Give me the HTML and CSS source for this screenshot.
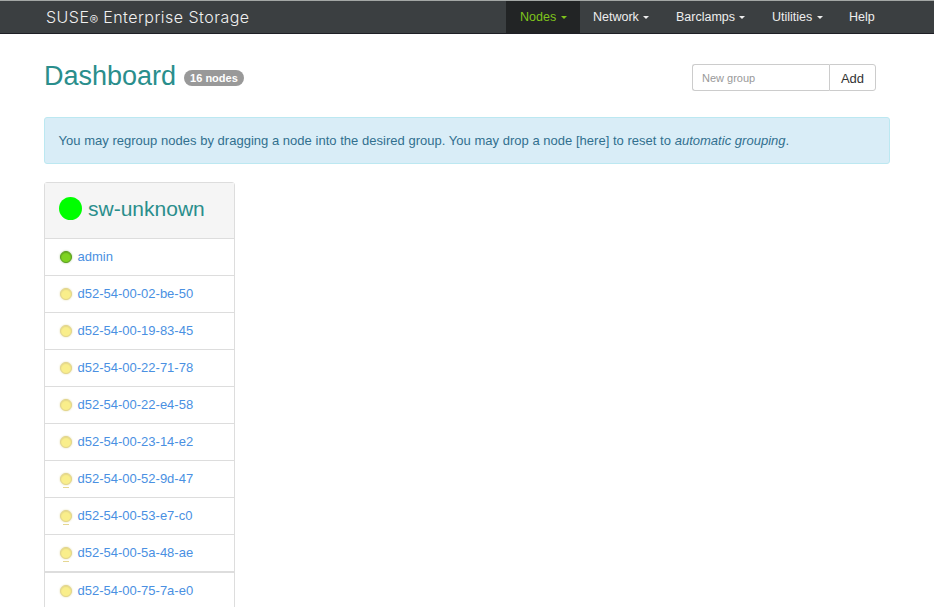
FILE: index.html
```html
<!DOCTYPE html>
<html lang="en">
<head>
<meta charset="utf-8">
<title>Dashboard</title>
<link rel="stylesheet" href="styles.css">
</head>
<body>
<nav class="navbar">
  <a class="brand">SUSE<span class="reg">®</span> Enterprise Storage</a>
  <div class="menu">
    <a class="item nodes active">Nodes<i class="caret"></i></a>
    <a class="item network">Network<i class="caret"></i></a>
    <a class="item barclamps">Barclamps<i class="caret"></i></a>
    <a class="item utilities">Utilities<i class="caret"></i></a>
    <a class="item">Help</a>
  </div>
</nav>
<main class="content">
  <header class="heading">
    <h1>Dashboard</h1>
    <span class="badge">16 nodes</span>
    <form class="group-form"><input type="text" placeholder="New group"><button type="button">Add</button></form>
  </header>
  <div class="alert">You may regroup nodes by dragging a node into the desired group. You may drop a node [here] to reset to <em>automatic grouping</em>.</div>
  <section class="panel">
    <h2><span class="pie"></span>sw-unknown</h2>
    <ul>
      <li><span class="led ready"></span><a>admin</a></li>
      <li><span class="led"></span><a>d52-54-00-02-be-50</a></li>
      <li><span class="led"></span><a>d52-54-00-19-83-45</a></li>
      <li><span class="led"></span><a>d52-54-00-22-71-78</a></li>
      <li><span class="led"></span><a>d52-54-00-22-e4-58</a></li>
      <li><span class="led"></span><a>d52-54-00-23-14-e2</a></li>
      <li><span class="led edge"></span><a>d52-54-00-52-9d-47</a></li>
      <li><span class="led edge"></span><a>d52-54-00-53-e7-c0</a></li>
      <li class="last-row"><span class="led edge"></span><a>d52-54-00-5a-48-ae</a></li>
      <li><span class="led"></span><a>d52-54-00-75-7a-e0</a></li>
    </ul>
  </section>
</main>
</body>
</html>
```
FILE: styles.css
```css
* { box-sizing: border-box; }
html, body { height: 100%; }
body {
  margin: 0;
  overflow: hidden;
  background: #fff;
  font: 13px/18px "Liberation Sans", Arial, sans-serif;
  color: #333;
}
.navbar {
  display: flex;
  height: 34px;
  padding-left: 46px;
  background: #3b3f41;
  border-top: 1px solid #a3a7a5;
  border-bottom: 1px solid #1e1f25;
}
.brand {
  width: 460px;
  font: 300 16px/32px Inter, sans-serif;
  letter-spacing: 0.48px;
  color: #f0f0f0;
  white-space: nowrap;
}
.reg { font-size: 13px; letter-spacing: 0; position: relative; top: 2px; }
.menu { display: flex; }
.item {
  display: flex;
  align-items: center;
  padding: 0 13px 1px;
  font-size: 12.5px;
  color: #eee;
  white-space: nowrap;
}
.item.active { background: #222425; color: #7fc31c; }
.nodes { width: 74px; padding-left: 14px; }
.network { width: 83px; }
.barclamps { width: 96px; }
.utilities { width: 77px; }
.caret {
  flex: none;
  margin: 2px 0 0 auto;
  border: 3px solid transparent;
  border-top-color: currentColor;
  border-bottom: 0;
}
.network .caret, .barclamps .caret { margin-right: 1px; }
.content { padding: 30px 44px 0; }
.heading { display: flex; height: 53px; }
h1 {
  margin: -4px 8px 0 0;
  font-size: 27px;
  line-height: 32px;
  font-weight: 400;
  color: #2a8e8c;
}
.badge {
  height: 16px;
  margin-top: 6px;
  padding: 0 6px;
  border-radius: 8px;
  background: #999;
  color: #fff;
  font-size: 11px;
  line-height: 17px;
  font-weight: 700;
}
.group-form {
  display: flex;
  width: 184px;
  height: 27px;
  margin: 0 14px 0 auto;
}
input, button {
  margin: 0;
  border: 1px solid #ccc;
  background: #fff;
  font-family: inherit;
}
input {
  width: 137px;
  padding: 1px 9px 0;
  border-right: 0;
  border-radius: 3px 0 0 3px;
  font-size: 11px;
}
input::placeholder { color: #999; opacity: 1; }
button {
  width: 47px;
  padding: 1px 0 0;
  border-radius: 0 3px 3px 0;
  font-size: 13px;
  color: #333;
}
.alert {
  width: 846px;
  height: 47px;
  padding: 14px 13.5px;
  border: 1px solid #bce8f1;
  border-radius: 3px;
  background: #d9edf7;
  color: #31708f;
  letter-spacing: 0.022px;
  white-space: nowrap;
}
.panel {
  width: 191px;
  margin-top: 18px;
  border: 1px solid #ddd;
  border-radius: 3px 3px 0 0;
}
h2 {
  display: flex;
  align-items: center;
  height: 55px;
  margin: 0;
  padding: 0 14px 3px;
  background: #f5f5f5;
  font-size: 21px;
  font-weight: 400;
  color: #2a8e8c;
}
.pie {
  width: 23px;
  height: 23px;
  margin: -1px 6px 0 0;
  border-radius: 50%;
  background: #0f0;
}
ul { margin: 0; padding: 0; list-style: none; }
li {
  display: flex;
  align-items: center;
  height: 37px;
  padding: 0 15px 1px;
  border-top: 1px solid #ddd;
}
.last-row { height: 38px; border-bottom: 1px solid #ddd; }
.led {
  position: relative;
  width: 12px;
  height: 12px;
  margin: 1px 5.5px 0 0;
  border: 1px solid #e2d58c;
  border-radius: 50%;
  background: #f9ee8b;
  box-shadow: inset 0 1px 1px #e6d98a, 0 0 2px #dfd6a4;
}
.ready {
  border-color: #5b9d21;
  background: #7ed321;
  box-shadow: inset 0 1px 1px #64aa20, 0 0 2px #9dbd83;
}
.edge::after {
  content: "";
  position: absolute;
  left: 2px;
  bottom: -4px;
  width: 6px;
  height: 1px;
  background: #e5d793;
}
li a { color: #4a90e2; }
```
